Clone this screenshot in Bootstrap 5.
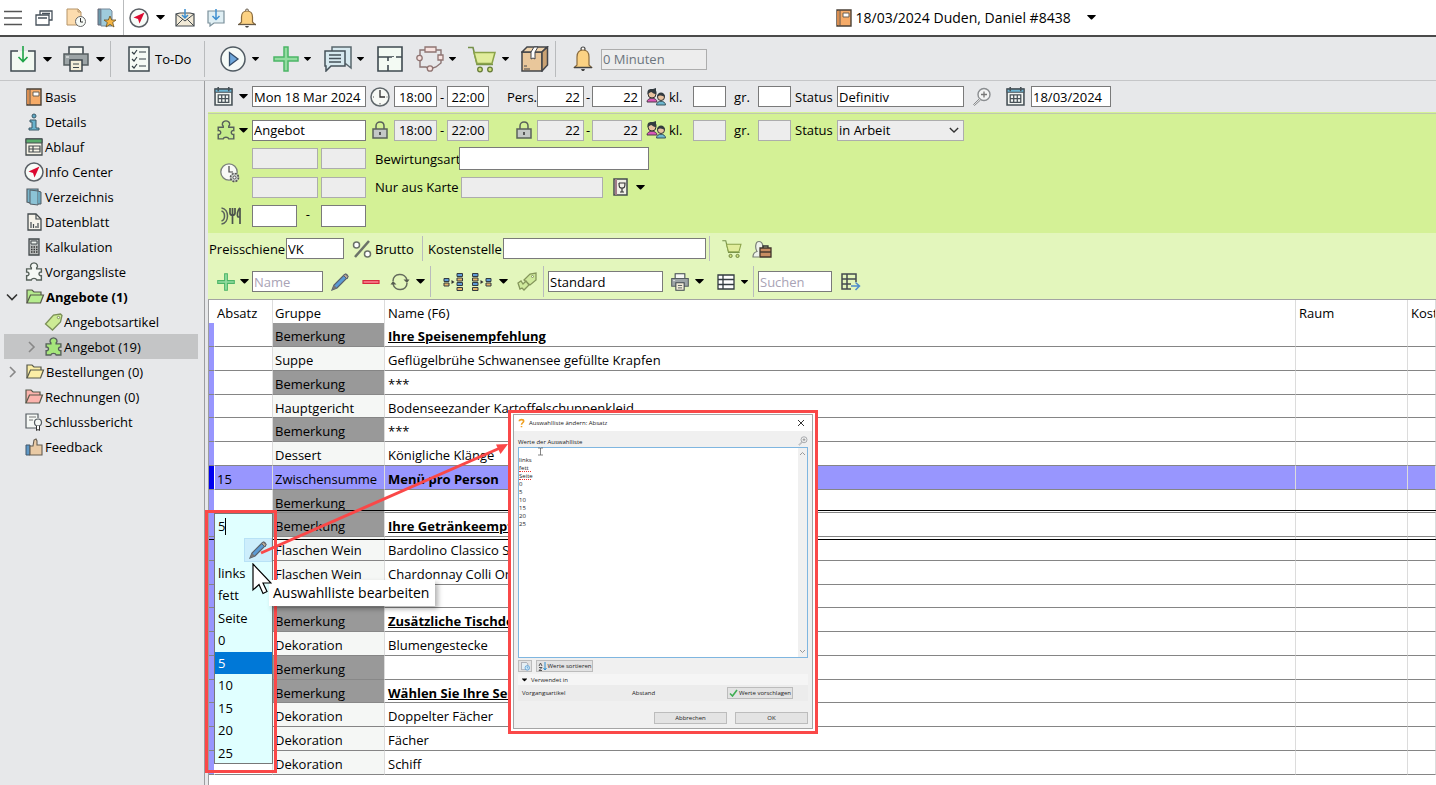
<!DOCTYPE html>
<html lang="de">
<head>
<meta charset="utf-8">
<meta name="viewport" content="width=device-width, initial-scale=1">
<title>18/03/2024 Duden, Daniel #8438</title>
<link href="https://cdn.jsdelivr.net/npm/bootstrap@5.3.0/dist/css/bootstrap.min.css" rel="stylesheet">
<style>
body{font-family:"Open Sans","Noto Sans",sans-serif;font-size:13px;line-height:18px;color:#000;background:#fff;overflow-x:hidden}
svg{display:block;flex:none}
.slots{display:grid;align-items:center;justify-items:start;white-space:nowrap}
.slots>*{min-width:0}
.ib{border:0;background:none;padding:0;color:#000;display:block}
.vr-line{width:1px;height:100%;background:#b9bbbd}
.fld{height:21px;border:1px solid #7a7a7a;border-radius:0;background:#fff;padding:0 1px;font-size:13px;line-height:18px;color:#000;width:100%;display:block}
.fld.off{background:#ededed;border-color:#adadad}
.fld.num{text-align:right;padding-right:3px}
.fld.mid{text-align:center}
.fld.tall{height:22px}
.fld::placeholder{color:#a9a3b5;opacity:1}
.dash{justify-self:center}
.title-bar{height:37px;border-bottom:2px solid #4a4a4a}
.title-slots{grid-template-columns:31px 31px 31px 26px 6px 27px 19px 32px 31px 1fr;height:35px}
.doc-title{margin-right:23.7%;font-size:14px}
.tool-bar{background:#e7e8ea;height:44px;border-bottom:1px solid #c5c6c8}
.tool-slots{grid-template-columns:33px 20px 33px 14px 18px 27px 49px 16px 32px 21px 31px 20px 33px 20px 39px 33px 19px 34px 19px 34px 18px 28px 106px;height:36px;padding-left:10px}
.work{min-height:calc(100vh - 81px)}
.side{width:205px;flex:none;background:#e7e8ea;border-right:1px solid #9c9d9f;padding:3px 6px 0 4px}
.tree a{display:flex;align-items:center;height:25px;color:#000;text-decoration:none;padding-left:19px;white-space:nowrap}
.tree a.twig{padding-left:2px}
.tree a.twig .chev,.tree a.sub-twig .chev{margin-right:6px}
.tree a.leaf{padding-left:39px}
.tree a.sub-twig{padding-left:21px;background:#c4c5c6}
.main-pane{background:#e7e8ea;padding-left:3px;min-width:0}
.head-slots{grid-template-columns:31px 13px 114px 28px 43px 10px 42px 48px 47px 8px 50px 27px 24px 33px 32px 33px 46px 127px 42px 25px 80px}
.head-slots>:first-child{margin-left:6px}
.row-date{height:31px}
.green{background:#d4f196;border-top:1px solid #d4f196;padding-bottom:6px}
.green-line{height:1px;background:#bfc9ad}
.row-offer{height:32px}
.detail{grid-template-columns:44px 66px 3px 45px 9px 84px 2px 142px 10px 23px 12px;grid-template-rows:23px 24px 23px;row-gap:5px;padding-top:1px}
.detail .icon-tall{grid-row:1/3;grid-column:1}
.detail .wide{grid-column:7/13;width:190px;height:23px;margin-left:0}
.detail .c1{grid-column:1}
.detail .c2{grid-column:2}
.light{background:#e3f6bc;height:67px;padding-top:3px;border-bottom:1px solid #a3a3a3}
.bar-a{grid-template-columns:78px 58px 8px 23px 47px 6px 75px 203px 3px 13px 30px 22px;height:25px}
.bar-a>label:first-child{padding-left:1px}
.bar-b{grid-template-columns:32px 12px 71px 8px 31px 28px 26px 14px 13px 29px 27px 18px 26px 5px 115px 8px 24px 22px 24px 12px 5px 74px 9px 20px;height:31px;margin-top:5px}
.grid-wrap{background:#fff;border-left:1px solid #9c9d9f;min-height:calc(100vh - 300px)}
.items{table-layout:fixed;width:100%;border-collapse:separate;border-spacing:0}
.items th,.items td{height:24px;padding:3px 2px 0;font-weight:400;white-space:nowrap;overflow:hidden;border-right:1px solid #dcdcdc;line-height:18px}
.items td{border-bottom:1px solid #858585}
.items tr:nth-child(4n) td{height:23px}
.items thead th{height:23px}
.items td:first-child{background:#9896fe;border-right:1px solid #fff;padding:0}
.items th:first-child{border:0}
.items td:nth-child(3){background:#f5f7f5}
.items td:nth-child(n+4),.items th:nth-child(n+4){padding-left:3px}
.items tr.note td:nth-child(3){background:#999;border-bottom-color:#888}
.items tr.sum td{background:#9896fe}
.items tr.sum td:first-child{background:#0000f0}
.items tr.cur{position:relative}
.items tr.cur td:first-child::after{content:"";position:absolute;left:0;right:0;top:-3px;bottom:-3px;border-top:1px solid #000;border-bottom:1px solid #000}
.items u{font-weight:700}
.overlay-root{left:205px}
.frame{position:absolute;border:3px solid #fa4848}
.pick-frame{left:0;top:510px;width:72px;height:263px;z-index:4;pointer-events:none}
.pick{position:absolute;left:9px;top:513px;width:59px;height:251px;background:#e0ffff;border:1px solid #777;z-index:3}
.pick input{border:0;background:none;height:24px;width:100%;padding:0 3px;outline:0;font-size:13px;display:block}
.pick .text-caret{position:absolute;left:10px;top:4px;width:1px;height:17px;background:#000}
.pick .edit{width:28px;height:24px;margin-left:29px;background:#cdeefc;border:1px solid #b8e2f6;padding:2px 4px}
.pick li{height:23px;line-height:22px;padding-left:3px}
.pick li:nth-child(2n+1){height:22px}
.pick li.on{background:#0078d7;color:#fff}
.arrow,.pointer{position:absolute;z-index:6;pointer-events:none}
.arrow{left:52px;top:435px}
.pointer{left:47px;top:563px;z-index:7}
.tip{position:absolute;left:64px;top:580px;height:26px;padding:0 6px 0 4px;line-height:26px;font-size:14px;background:#fff;box-shadow:3px 3px 5px rgba(0,0,0,.3);z-index:5;white-space:nowrap}
.dlg-frame{left:303px;top:410px;width:310px;height:324px;background:#fff;z-index:5;padding:1px 2px 2px}
.dlg{background:#f0f0f0;border:1px solid #a5a5a5;height:100%;font-size:6px;line-height:8px;color:#222;white-space:nowrap}
.dlg-title{height:16px;background:#fff}
.dlg-label{height:16px;padding-bottom:1px}
.dlg textarea{width:100%;height:211px;border:1px solid #7fb6e0;border-radius:0;padding:0;font-size:6px;line-height:8px;resize:none;display:block;outline:0;overflow:hidden;color:#222}
.dlg .gbtn{background:#e3e3e3;border:1px solid #bcbcbc;font-size:6px;line-height:8px;padding:1px 2px;color:#222;height:12px;display:flex;align-items:center;justify-content:center;gap:1px}
.wavy{position:absolute;left:1px;height:1px;width:12px;border-bottom:1px dotted #e33}
.gbtn.w-s{width:14px}.gbtn.w-m{width:57px}.gbtn.w-l{width:66px}.gbtn.w-x{width:73px}
.used-head{background:#f5f5f5;height:11px;margin-top:2px}
.used-row{background:#ececec;height:16px}
.scroll-strip{position:absolute;right:1px;top:1px;bottom:1px;width:9px;background:#f0f0f0}
.ibeam{position:absolute;left:20px;top:0}
</style>
</head>
<body>
<svg width="0" height="0" class="position-absolute" aria-hidden="true">
<defs>
<symbol id="caret" viewBox="0 0 10 6"><path d="M0 0h10v1L5.500 5.500h-1L0 1z" fill="#000"/></symbol>
<symbol id="menu" viewBox="0 0 18 18"><path d="M0 2.500h18M0 9h18M0 15.500h18" stroke="#555" stroke-width="1.300"/></symbol>
<symbol id="windows" viewBox="0 0 18 18"><g fill="#fff" stroke="#46505a" stroke-width="1.300"><path d="M5 6V2h12v9h-3"/><path d="M1 6h13v10H1z"/><path d="M3 9h9M7 4.500h8"/></g></symbol>
<symbol id="fileclock" viewBox="0 0 20 20"><path d="M1 1h11l3 3v13H1z" fill="#fcdcae" stroke="#b59468"/><path d="M12 1v3h3" fill="none" stroke="#b59468"/><circle cx="14.500" cy="13.500" r="5" fill="#f6faf6" stroke="#666"/><path d="M14.500 10v4H17" fill="none" stroke="#333"/></symbol>
<symbol id="bookclock" viewBox="0 0 20 20"><path d="M1 1h11l3 3v13H1z" fill="#e4eef4" stroke="#667"/><circle cx="14" cy="13" r="5" fill="#d9effa" stroke="#3d8ed0" stroke-width="1.500"/><path d="M14 10v3.500h2.500" fill="none" stroke="#3d8ed0" stroke-width="1.500"/></symbol>
<symbol id="bookstar" viewBox="0 0 20 20"><path d="M1 1h3v16H1z" fill="#6b98aa" stroke="#667"/><path d="M4 1h9l2 2v15H4z" fill="#9fcbdc" stroke="#789"/><path d="M13 8l1.700 4H19l-3.300 2.500L17 19l-4-2.600L9 19l1.300-4.500L7 12h4.300z" fill="#f6b544" stroke="#665226" stroke-width=".8"/></symbol>
<symbol id="compass" viewBox="0 0 20 20"><circle cx="10" cy="10" r="9" fill="#f8fcf8" stroke="#5b6066" stroke-width="1.500"/><path d="M15.500 4.500L4.500 9.500l4.500 1.500 1.500 4.500z" fill="#dc0a30"/></symbol>
<symbol id="mail" viewBox="0 0 20 18"><path d="M1 5v12h18V5l-4-1H5z" fill="#f2ead7" stroke="#444b50" stroke-width="1.200"/><path d="M1 5l9 7 9-7M1 17l7-7M19 17l-7-7" fill="none" stroke="#444b50"/><path d="M10 0v9M7 6l3 3 3-3" fill="none" stroke="#3d8ed0" stroke-width="1.500"/></symbol>
<symbol id="chatin" viewBox="0 0 18 18"><path d="M1 2h16v12H7l-4 3v-3H1z" fill="#e0eff4" stroke="#7a8f9a" stroke-width="1.200"/><path d="M9 0v10M5.500 7L9 10.500 12.500 7" fill="none" stroke="#3d8ed0" stroke-width="1.500"/></symbol>
<symbol id="bell" viewBox="0 0 20 26"><circle cx="10" cy="3" r="2" fill="#fff" stroke="#444" stroke-width="1.200"/><path d="M4 19V11c0-4 2-7 6-7s6 3 6 7v8l2.500 2.500H1.500z" fill="#fcd283" stroke="#8a6b3d" stroke-width="1.200"/><path d="M1 21.500h18" stroke="#444" stroke-width="1.500"/><path d="M8 23h4l-1 2H9z" fill="#444"/></symbol>
<symbol id="bellsm" viewBox="0 0 18 20"><circle cx="9" cy="2.500" r="1.500" fill="#fff" stroke="#665a48"/><path d="M3.500 14V9c0-3.500 2-6 5.500-6s5.500 2.500 5.500 6v5l2.500 2.500H1z" fill="#fcd283" stroke="#8a6b3d" stroke-width="1.200"/><path d="M0 16.500h18" stroke="#665a48" stroke-width="1.300"/><path d="M7 18h4l-1 1.500H8z" fill="#444"/></symbol>
<symbol id="book" viewBox="0 0 16 18"><path d="M1 1h14v16H1z" fill="#f6ab68" stroke="#4b4238" stroke-width="1.400"/><path d="M4 1v16" stroke="#5d5145"/><path d="M7 4h6v4H7z" fill="#fff" stroke="#6d6150"/><path d="M2 2v14" stroke="#d98d50" stroke-width="2"/></symbol>
<symbol id="import" viewBox="0 0 26 26"><path d="M8 5H1v20h24V5h-7" fill="#f2f9f1" stroke="#3f4a50" stroke-width="1.500"/><path d="M13 0v15M8.500 11l4.500 4.500L17.500 11" fill="none" stroke="#1ea447" stroke-width="1.600"/></symbol>
<symbol id="printer" viewBox="0 0 26 26"><path d="M6 8V1h14v7" fill="#f6f8f4" stroke="#3d464c" stroke-width="1.500"/><path d="M1 8h24v11H1z" fill="#9ca4a6" stroke="#555d60" stroke-width="1.500"/><path d="M3 11h3" stroke="#fff"/><path d="M7 14h12v11H7z" fill="#f3eed9" stroke="#3d464c" stroke-width="1.500"/><path d="M10 18h6M10 21.500h6" stroke="#3d464c" stroke-width="1.200"/></symbol>
<symbol id="todo" viewBox="0 0 22 26"><path d="M1 1h20v24H1z" fill="#f5faf5" stroke="#3f4a50" stroke-width="1.500"/><path d="M11 6h7M11 13h7M11 20h7M4 6l2 2 3-4M4 13l2 2 3-4M4 20l2 2 3-4" fill="none" stroke="#333f45" stroke-width="1.200"/></symbol>
<symbol id="play" viewBox="0 0 26 26"><circle cx="13" cy="13" r="12" fill="#f5faf7" stroke="#505a62" stroke-width="1.500"/><path d="M9.500 6.500v13l8.500-6.500z" fill="#6ea8dc" stroke="#334c68" stroke-width="1.300"/></symbol>
<symbol id="plus" viewBox="0 0 26 26"><path d="M11 1h4v10h10v4H15v10h-4V15H1v-4h10z" fill="#93dca0" stroke="#4cb567" stroke-width="1.500"/></symbol>
<symbol id="chats" viewBox="0 0 28 26"><path d="M8 1h19v21l-5-4H8z" fill="#d7e9ef" stroke="#59676e" stroke-width="1.500"/><path d="M1 5h20v15H7l-5 5v-5H1z" fill="#d7e9ef" stroke="#46525a" stroke-width="1.500"/><path d="M5 9h12M5 12.500h12M5 16h12" stroke="#46525a" stroke-width="1.500"/></symbol>
<symbol id="floor" viewBox="0 0 26 26"><path d="M1 1h24v24H1z" fill="#f3faf3" stroke="#3f4a50" stroke-width="1.600"/><path d="M1 11h14M19 11h6M11 11v4M11 19v6M16 11v-1" stroke="#3f4a50" stroke-width="1.600"/></symbol>
<symbol id="ring" viewBox="0 0 28 26"><path d="M9 4H4v17h6l4 2 6-2 5-4V4H9" fill="none" stroke="#8b7473" stroke-width="1.400"/><g fill="#f8e3e0" stroke="#8f7472" stroke-width="1.300"><path d="M9 1h11v5H9zM22 9h5v5h-5z"/><circle cx="3.500" cy="12" r="2.700"/><circle cx="14" cy="22.500" r="2.700"/></g></symbol>
<symbol id="cart" viewBox="0 0 28 26"><path d="M0 1h5l4 17h16" fill="none" stroke="#75904a" stroke-width="1.600"/><path d="M6 6h21l-3 11H9z" fill="#e1ed9c" stroke="#8ba34a" stroke-width="1.500"/><g fill="#cfe07e" stroke="#667c38" stroke-width="1.300"><circle cx="12" cy="23" r="2.300"/><circle cx="22" cy="23" r="2.300"/></g></symbol>
<symbol id="box" viewBox="0 0 28 26"><path d="M1 6h20v19H1z" fill="#e9c79b" stroke="#43454a" stroke-width="1.500"/><path d="M1 6l5-5h20l-5 5z" fill="#f0d4ad" stroke="#43454a" stroke-width="1.500"/><path d="M21 6l5.500-5v18L21 25z" fill="#caa273" stroke="#43454a" stroke-width="1.500"/><path d="M10 6l3-5h4l-3 5v7l-2-1-2 1z" fill="#fff" stroke="#43454a"/><path d="M3 20h3M3 23h6" stroke="#43454a"/></symbol>
<symbol id="info" viewBox="0 0 18 18"><circle cx="9" cy="3" r="2" fill="#5fa9c6" stroke="#3b5866"/><path d="M5 7h6v8h3v2H4v-2h3V9H5z" fill="#69b2cd" stroke="#3b5866"/></symbol>
<symbol id="sched" viewBox="0 0 18 18"><path d="M1 1h16v16H1z" fill="#f6f3e6" stroke="#444b4e" stroke-width="1.300"/><path d="M1 1h16v4H1z" fill="#59ac6c" stroke="#444b4e"/><path d="M4 8h11v6H4zM8 8v6M4 11h11" fill="none" stroke="#444b4e" stroke-width="1.200"/></symbol>
<symbol id="dir" viewBox="0 0 18 18"><path d="M2 1h11v14H5l-3-1z" fill="#79b5cb" stroke="#555f66" stroke-width="1.200"/><path d="M5 2l8 1v14l-8-1z" fill="#8cc3d6" stroke="#555f66"/><path d="M13 3l3 1v12h-3" fill="#6da8be" stroke="#555f66"/></symbol>
<symbol id="sheet" viewBox="0 0 18 18"><path d="M3 1h8l5 5v11H3z" fill="#f6f3ea" stroke="#444b4e" stroke-width="1.300"/><path d="M11 1v5h5M6 9v6M8.500 11v4M11 13v2M13 10v5" fill="none" stroke="#444b4e" stroke-width="1.200"/></symbol>
<symbol id="calc" viewBox="0 0 18 18"><path d="M4 1h10v16H4z" fill="#b9bcbb" stroke="#444b4e" stroke-width="1.300"/><path d="M6 3h6v3H6z" fill="#eef3ee" stroke="#444b4e"/><path d="M6 9h7M6 11.500h7M6 14h7" stroke="#333" stroke-width="1.300" stroke-dasharray="1.500 1"/></symbol>
<symbol id="puzzle" viewBox="0 0 18 18"><path d="M2 6.500h4.500V5.500C5 4.500 5.500 .8 9 .8s4 3.700 2.500 4.700v1H16v3c-3-.5-3 4 0 3.500V17h-4.500c-.5-2-4.500-2-5 0H2v-4c3 .5 3-4 0-3.500z" fill="var(--f,#f5f8f5)" stroke="#56605a" stroke-width="1.300"/></symbol>
<symbol id="folder" viewBox="0 0 18 18"><path d="M1 15V2h5l2 2h7v3" fill="var(--f)" stroke="#56584a" stroke-width="1.200"/><path d="M1 15L4.500 7H17.500L14.500 15z" fill="var(--f)" stroke="#56584a" stroke-width="1.200"/></symbol>
<symbol id="tag" viewBox="0 0 18 18"><path d="M1 11L9 2l7-1 1.500 1.500L16 9l-8 8z" fill="#cdeb95" stroke="#7b8f57" stroke-width="1.300"/><circle cx="14" cy="4.500" r="1.200" fill="#fff" stroke="#7b8f57"/></symbol>
<symbol id="report" viewBox="0 0 18 18"><path d="M11 15H1V1h12v4" fill="#f5f8f5" stroke="#555b60" stroke-width="1.200"/><path d="M4 4h7M4 7h4" stroke="#777"/><circle cx="13" cy="9.500" r="3.500" fill="#f5f8f5" stroke="#555b60" stroke-width="1.200"/><path d="M11.500 13v4.500l1.500-1 1.500 1V13" fill="#fff" stroke="#333"/></symbol>
<symbol id="thumb" viewBox="0 0 18 18"><path d="M1 7h4v10H1z" fill="#5d97c6" stroke="#40576a"/><path d="M5 8h3l1-6 2-1 1 2v4h5v10H5z" fill="#e9caa5" stroke="#655c50" stroke-width="1.100"/></symbol>
<symbol id="cdown" viewBox="0 0 12 12"><path d="M1 3.500l5 5 5-5" fill="none" stroke="#333" stroke-width="1.600"/></symbol>
<symbol id="cright" viewBox="0 0 12 12"><path d="M4 1l5 5-5 5" fill="none" stroke="#888" stroke-width="1.600"/></symbol>
<symbol id="cal" viewBox="0 0 18 18"><path d="M1 2h16v15H1z" fill="#f2f5f2" stroke="#485258" stroke-width="1.500"/><path d="M1 2h16v3H1z" fill="#6cb5d2" stroke="#485258"/><path d="M4 0v4M14 0v4" stroke="#485258" stroke-width="1.500"/><path d="M4 7.500h10v7H4zM4 11h10M7.300 7.500v7M10.700 7.500v7" fill="none" stroke="#485258" stroke-width="1.200"/></symbol>
<symbol id="clock" viewBox="0 0 20 20"><circle cx="10" cy="10" r="9" fill="#f8faf6" stroke="#5f676b" stroke-width="1.500"/><path d="M10 3v7h5" fill="none" stroke="#333" stroke-width="1.300"/><path d="M3 10h1M10 16v1.500M16.500 10h1" stroke="#555"/></symbol>
<symbol id="lock" viewBox="0 0 16 18"><path d="M4 8V5c0-5.300 8-5.300 8 0v3" fill="none" stroke="#59615b" stroke-width="1.500"/><path d="M1 8h14v9H1z" fill="#c4c8c6" stroke="#59615b" stroke-width="1.500"/><path d="M8 11v3" stroke="#333" stroke-width="1.500"/></symbol>
<symbol id="people" viewBox="0 0 20 18"><circle cx="6" cy="6" r="4" fill="#e9c2a0" stroke="#333"/><path d="M1.500 6C1 0 5 1 7 1l3-1v3c1 1 .5 2 0 3-3 0-4-2-5-2z" fill="#333b40"/><path d="M1 14c0-5 10-5 10 0z" fill="#db57b8" stroke="#4b3a48"/><circle cx="15" cy="9" r="3.500" fill="#e9c2a0" stroke="#333"/><path d="M11 9c0-6 8-6 8 0-3-2-6-2-8 0z" fill="#333b40"/><path d="M10.500 17c0-5 9-5 9 0z" fill="#6db7cf" stroke="#36525c"/></symbol>
<symbol id="zoomp" viewBox="0 0 20 20"><circle cx="12" cy="7.500" r="6" fill="#f3f4f4" stroke="#8a8d90" stroke-width="1.400"/><path d="M12 4.500v6M9 7.500h6" stroke="#777" stroke-width="1.300"/><path d="M7.500 11.500L1.500 17.500l1 1 6-5.500" fill="#ddd" stroke="#8a8d90"/></symbol>
<symbol id="clockgear" viewBox="0 0 20 20"><circle cx="9" cy="9" r="8.200" fill="#f8faf6" stroke="#7a817a" stroke-width="1.300"/><path d="M9 3v6h4" fill="none" stroke="#444" stroke-width="1.200"/><circle cx="14.500" cy="14.500" r="4" fill="#ccd2cc" stroke="#555" stroke-width="1.600" stroke-dasharray="2 1.100"/><circle cx="14.500" cy="14.500" r="1.500" fill="#fff" stroke="#555"/></symbol>
<symbol id="dine" viewBox="0 0 21 18"><path d="M1 1c8 1 8 15 0 16M1 4c4 1 4 9 0 10" fill="none" stroke="#59615b" stroke-width="1.500"/><path d="M9.500 1v5c0 3 5 3 5 0V1M12 1v16M19.500 1v16M19.500 1c-3 2-3 8-2 9h2" fill="none" stroke="#4b524c" stroke-width="1.700"/></symbol>
<symbol id="wine" viewBox="0 0 15 18"><path d="M1 1h13v16H1z" fill="#f0efe6" stroke="#444b4e" stroke-width="1.500"/><path d="M3 1v16" stroke="#a27c8a" stroke-width="2"/><path d="M6 5h6c0 5-1 5-3 5s-3 0-3-5M9 10v4M7 14h4" fill="none" stroke="#333" stroke-width="1.200"/></symbol>
<symbol id="percent" viewBox="0 0 20 18"><path d="M17 1L3 17" stroke="#6b7268" stroke-width="2.500"/><circle cx="4.500" cy="5" r="3" fill="#fff" stroke="#6b7268" stroke-width="1.500"/><circle cx="15.500" cy="14" r="3" fill="#fff" stroke="#6b7268" stroke-width="1.500"/></symbol>
<symbol id="client" viewBox="0 0 20 18"><path d="M7 17H1c0-4 2-5 4-5.500-2-3-2-10 2-10s5 7 3 9" fill="#eef2ea" stroke="#7a8077" stroke-width="1.200"/><path d="M11 8V6h5v2" fill="none" stroke="#333" stroke-width="1.300"/><path d="M8 8h11v9H8z" fill="#c98d63" stroke="#41352d" stroke-width="1.300"/><path d="M8 12h11" stroke="#41352d" stroke-width="1.400"/></symbol>
<symbol id="pencil" viewBox="0 0 18 18"><path d="M1 17l2-5L13.500 1.500c2-1 4 1 3 3L6 15z" fill="#5b9bd5" stroke="#59606a" stroke-width="1.200"/><path d="M12.500 2.500l3.500 3.500 1-2.500-2.500-2.500z" fill="#b9a996" stroke="#59606a"/><path d="M1 17l2-5 3 3z" fill="#777"/></symbol>
<symbol id="minus" viewBox="0 0 18 18"><path d="M1 7.500h16v3H1z" fill="#f2707f" stroke="#d8283f" stroke-width="1.200"/></symbol>
<symbol id="cycle" viewBox="0 0 20 18"><path d="M3 8c0-8 12-9 14-1M17 10c0 8-12 9-14 1" fill="none" stroke="#646b5c" stroke-width="1.500"/><path d="M13.500 6.500h6L17 10zM.5 11.500h6L3 8z" fill="#565d50"/></symbol>
<symbol id="split" viewBox="0 0 20 18"><g fill="#5f9bd6" stroke="#333b40"><path d="M1 5.500h5v3H1zM14 .5h5.500v3H14zM14 9.500h5.500v3H14z"/></g><g fill="#e3b46a" stroke="#333b40"><path d="M1 10h5v3H1zM14 5h5.500v3H14zM14 14.500h5.500v3H14z"/></g><path d="M8.500 7l3 2-3 2z" fill="#333"/></symbol>
<symbol id="merge" viewBox="0 0 20 18"><g fill="#5f9bd6" stroke="#333b40"><path d="M14 5.500h5v3h-5zM.5.5H6v3H.5zM.5 9.500H6v3H.5z"/></g><g fill="#e3b46a" stroke="#333b40"><path d="M14 10h5v3h-5zM.5 5H6v3H.5zM.5 14.500H6v3H.5z"/></g><path d="M8.500 7l3 2-3 2z" fill="#333"/></symbol>
<symbol id="tags" viewBox="0 0 20 20"><path d="M7 8l6-6 6-1v7l-6 5z" fill="#cfea9c" stroke="#84965b" stroke-width="1.300"/><path d="M1 11l3-2 2 3 3-3 3 4-5 5-2-2-2 1z" fill="#cfea9c" stroke="#84965b" stroke-width="1.300"/><circle cx="15.500" cy="4.500" r="1" fill="#fff" stroke="#84965b"/></symbol>
<symbol id="tbl" viewBox="0 0 18 18"><path d="M1 2h16v14H1zM1 6.500h16M1 11.500h16M6 2v14" fill="#fff" stroke="#333b40" stroke-width="1.300"/></symbol>
<symbol id="tblout" viewBox="0 0 20 18"><path d="M15 9V1H1v15h9M1 6h14M1 11h9M6 1v15" fill="none" stroke="#444b4e" stroke-width="1.500"/><path d="M10 13h8M14.500 9.500l4 3.500-4 4" fill="none" stroke="#4d8ccc" stroke-width="1.500"/></symbol>
</defs>
</svg>

<header>
<div class="title-bar d-flex align-items-center">
<div class="slots title-slots flex-grow-1 ps-1">
<button class="ib" aria-label="Menü"><svg width="18" height="18"><use href="#menu"/></svg></button>
<button class="ib" aria-label="Fenster"><svg width="18" height="18"><use href="#windows"/></svg></button>
<button class="ib" aria-label="Verlauf"><svg width="20" height="20"><use href="#fileclock"/></svg></button>
<button class="ib" aria-label="Favoriten"><svg width="20" height="20"><use href="#bookstar"/></svg></button>
<span class="vr-line"></span>
<button class="ib" aria-label="Info Center"><svg width="20" height="20"><use href="#compass"/></svg></button>
<button class="ib" aria-label="Mehr"><svg width="9" height="5"><use href="#caret"/></svg></button>
<button class="ib" aria-label="Post"><svg width="20" height="18"><use href="#mail"/></svg></button>
<button class="ib" aria-label="Nachricht"><svg width="18" height="18"><use href="#chatin"/></svg></button>
<button class="ib" aria-label="Alarm"><svg width="18" height="20"><use href="#bellsm"/></svg></button>
</div>
<button class="ib doc-title d-flex align-items-center"><svg width="16" height="18" class="me-1"><use href="#book"/></svg>18/03/2024 Duden, Daniel #8438<svg width="9" height="5" class="ms-3"><use href="#caret"/></svg></button>
</div>
<div class="tool-bar pt-1">
<div class="slots tool-slots">
<button class="ib" aria-label="Import"><svg width="26" height="26"><use href="#import"/></svg></button>
<button class="ib" aria-label="Mehr"><svg width="9" height="5"><use href="#caret"/></svg></button>
<button class="ib" aria-label="Drucken"><svg width="26" height="26"><use href="#printer"/></svg></button>
<button class="ib" aria-label="Mehr"><svg width="9" height="5"><use href="#caret"/></svg></button>
<span class="vr-line"></span>
<button class="ib" aria-label="Liste"><svg width="22" height="26"><use href="#todo"/></svg></button>
<button class="ib">To-Do</button>
<span class="vr-line"></span>
<button class="ib" aria-label="Start"><svg width="26" height="26"><use href="#play"/></svg></button>
<button class="ib" aria-label="Mehr"><svg width="7" height="4"><use href="#caret"/></svg></button>
<button class="ib" aria-label="Neu"><svg width="26" height="26"><use href="#plus"/></svg></button>
<button class="ib" aria-label="Mehr"><svg width="7" height="4"><use href="#caret"/></svg></button>
<button class="ib" aria-label="Chat"><svg width="28" height="26"><use href="#chats"/></svg></button>
<button class="ib" aria-label="Mehr"><svg width="7" height="4"><use href="#caret"/></svg></button>
<button class="ib" aria-label="Raumplan"><svg width="26" height="26"><use href="#floor"/></svg></button>
<button class="ib" aria-label="Ablauf"><svg width="28" height="26"><use href="#ring"/></svg></button>
<button class="ib" aria-label="Mehr"><svg width="7" height="4"><use href="#caret"/></svg></button>
<button class="ib" aria-label="Warenkorb"><svg width="28" height="27"><use href="#cart"/></svg></button>
<button class="ib" aria-label="Mehr"><svg width="7" height="4"><use href="#caret"/></svg></button>
<button class="ib" aria-label="Paket"><svg width="28" height="26"><use href="#box"/></svg></button>
<span class="vr-line"></span>
<button class="ib" aria-label="Erinnerung"><svg width="20" height="26"><use href="#bell"/></svg></button>
<input class="fld off text-secondary" aria-label="Erinnerung in Minuten" value="0 Minuten">
</div>
</div>
</header>

<div class="work d-flex">
<nav class="side tree">
<a href="#"><svg width="22" height="18"><use href="#book"/></svg>Basis</a>
<a href="#"><svg width="22" height="18"><use href="#info"/></svg>Details</a>
<a href="#"><svg width="22" height="18"><use href="#sched"/></svg>Ablauf</a>
<a href="#"><svg width="22" height="20"><use href="#compass"/></svg>Info Center</a>
<a href="#"><svg width="22" height="18"><use href="#dir"/></svg>Verzeichnis</a>
<a href="#"><svg width="22" height="18"><use href="#sheet"/></svg>Datenblatt</a>
<a href="#"><svg width="22" height="18"><use href="#calc"/></svg>Kalkulation</a>
<a href="#"><svg width="22" height="19"><use href="#puzzle"/></svg>Vorgangsliste</a>
<a href="#" class="twig fw-bold"><svg class="chev" width="12" height="12"><use href="#cdown"/></svg><svg width="22" height="18" style="--f:#b5ec8e"><use href="#folder"/></svg>Angebote (1)</a>
<a href="#" class="leaf"><svg width="21" height="18"><use href="#tag"/></svg>Angebotsartikel</a>
<a href="#" class="sub-twig"><svg class="chev" width="12" height="12"><use href="#cright"/></svg><svg width="21" height="19" style="--f:#a5e67b"><use href="#puzzle"/></svg>Angebot (19)</a>
<a href="#" class="twig"><svg class="chev" width="12" height="12"><use href="#cright"/></svg><svg width="22" height="18" style="--f:#fbeea6"><use href="#folder"/></svg>Bestellungen (0)</a>
<a href="#"><svg width="22" height="18" style="--f:#fbb3ad"><use href="#folder"/></svg>Rechnungen (0)</a>
<a href="#"><svg width="22" height="18"><use href="#report"/></svg>Schlussbericht</a>
<a href="#"><svg width="22" height="18"><use href="#thumb"/></svg>Feedback</a>
</nav>

<main class="main-pane flex-grow-1">
<div class="slots head-slots row-date">
<svg width="19" height="19"><use href="#cal"/></svg>
<svg width="9" height="5"><use href="#caret"/></svg>
<input class="fld" aria-label="Datum" value="Mon 18 Mar 2024">
<svg class="ms-auto me-1" width="20" height="20"><use href="#clock"/></svg>
<input class="fld mid" aria-label="Beginn" value="18:00"><span class="dash">-</span><input class="fld mid" aria-label="Ende" value="22:00">
<label class="ms-auto" for="pers">Pers.</label>
<input class="fld num" id="pers" value="22"><span class="dash">-</span><input class="fld num" aria-label="Personen bis" value="22">
<svg class="ms-1" width="20" height="18"><use href="#people"/></svg>
<label for="kl1">kl.</label><input class="fld" id="kl1">
<label class="dash" for="gr1">gr.</label><input class="fld" id="gr1">
<label class="ms-1" for="st1">Status</label><input class="fld" id="st1" value="Definitiv">
<svg class="ms-2" width="20" height="20"><use href="#zoomp"/></svg>
<svg width="19" height="19"><use href="#cal"/></svg>
<input class="fld" aria-label="Statusdatum" value="18/03/2024">
</div>
<section class="green">
<div class="green-line"></div>
<div class="slots head-slots row-offer">
<svg class="ms-2" width="20" height="20" style="--f:#c4ec8c"><use href="#puzzle"/></svg>
<svg width="9" height="5"><use href="#caret"/></svg>
<input class="fld" aria-label="Vorgang" value="Angebot">
<svg class="dash" width="16" height="18"><use href="#lock"/></svg>
<input class="fld off mid" aria-label="Beginn Angebot" value="18:00"><span class="dash">-</span><input class="fld off mid" aria-label="Ende Angebot" value="22:00">
<svg class="ms-auto me-1" width="18" height="18"><use href="#lock"/></svg>
<input class="fld off num" aria-label="Personen von" value="22"><span class="dash">-</span><input class="fld off num" aria-label="Personen bis" value="22">
<svg class="ms-1" width="20" height="18"><use href="#people"/></svg>
<label for="kl2">kl.</label><input class="fld off" id="kl2">
<label class="dash" for="gr2">gr.</label><input class="fld off" id="gr2">
<label class="ms-1" for="st2">Status</label>
<div class="position-relative w-100"><select class="fld off" id="st2" style="appearance:none"><option>in Arbeit</option></select><svg class="position-absolute top-50 end-0 translate-middle-y me-1" width="12" height="10"><use href="#cdown"/></svg></div>
</div>
<div class="slots detail">
<svg class="icon-tall ms-2 ps-1" width="24" height="20"><use href="#clockgear"/></svg>
<input class="fld off" aria-label="Zeit 1"><i></i><input class="fld off" aria-label="Dauer 1"><i></i>
<label for="bew">Bewirtungsart</label>
<input class="fld wide" id="bew">
<input class="fld off c2" aria-label="Zeit 2"><i></i><input class="fld off" aria-label="Dauer 2"><i></i>
<label for="karte">Nur aus Karte</label><i></i>
<input class="fld off" id="karte"><i></i>
<svg width="15" height="18"><use href="#wine"/></svg>
<svg width="9" height="5"><use href="#caret"/></svg>
<svg class="c1 ms-2 ps-1" width="26" height="18"><use href="#dine"/></svg>
<div class="d-flex justify-content-between w-100 pe-1"><input class="fld tall" style="width:45px" aria-label="Essen von"><span class="pe-1">-</span></div><i></i>
<input class="fld tall" aria-label="Essen bis">
</div>
</section>
<section class="light">
<div class="slots bar-a">
<label for="preis">Preisschiene</label><input class="fld" id="preis" value="VK"><i></i>
<svg width="20" height="18"><use href="#percent"/></svg><span>Brutto</span><span class="vr-line"></span>
<label for="kst">Kostenstelle</label><input class="fld" id="kst"><i></i><span class="vr-line"></span>
<svg width="20" height="18"><use href="#cart"/></svg><svg width="20" height="18"><use href="#client"/></svg>
</div>
<div class="slots bar-b">
<svg class="ms-2" width="20" height="18"><use href="#plus"/></svg>
<svg width="9" height="5"><use href="#caret"/></svg>
<input class="fld" placeholder="Name" aria-label="Name"><i></i>
<svg width="18" height="18"><use href="#pencil"/></svg>
<svg width="18" height="18"><use href="#minus"/></svg>
<svg width="20" height="18"><use href="#cycle"/></svg>
<svg width="9" height="5"><use href="#caret"/></svg><span class="vr-line"></span>
<svg width="20" height="18"><use href="#split"/></svg>
<svg width="20" height="18"><use href="#merge"/></svg>
<svg width="9" height="5"><use href="#caret"/></svg>
<svg width="20" height="20"><use href="#tags"/></svg><span class="vr-line"></span>
<input class="fld" value="Standard" aria-label="Ansicht"><i></i>
<svg width="18" height="18"><use href="#printer"/></svg>
<svg width="9" height="5"><use href="#caret"/></svg>
<svg width="18" height="18"><use href="#tbl"/></svg>
<svg width="7" height="4"><use href="#caret"/></svg><span class="vr-line"></span>
<input class="fld" placeholder="Suchen" aria-label="Suchen"><i></i>
<svg width="20" height="18"><use href="#tblout"/></svg>
</div>
</section>
<div class="grid-wrap">
<table class="items">
<colgroup><col style="width:6px"><col style="width:58px"><col style="width:112px"><col><col style="width:112px"><col style="width:28px"></colgroup>
<thead><tr><th></th><th>Absatz</th><th>Gruppe</th><th>Name (F6)</th><th>Raum</th><th>Kost</th></tr></thead>
<tbody>
<tr class="note"><td></td><td></td><td>Bemerkung</td><td><u>Ihre Speisenempfehlung</u></td><td></td><td></td></tr>
<tr><td></td><td></td><td>Suppe</td><td>Geflügelbrühe Schwanensee gefüllte Krapfen</td><td></td><td></td></tr>
<tr class="note"><td></td><td></td><td>Bemerkung</td><td>***</td><td></td><td></td></tr>
<tr><td></td><td></td><td>Hauptgericht</td><td>Bodenseezander Kartoffelschuppenkleid</td><td></td><td></td></tr>
<tr class="note"><td></td><td></td><td>Bemerkung</td><td>***</td><td></td><td></td></tr>
<tr><td></td><td></td><td>Dessert</td><td>Königliche Klänge</td><td></td><td></td></tr>
<tr class="sum"><td></td><td>15</td><td>Zwischensumme</td><td><b>Menü pro Person</b></td><td></td><td></td></tr>
<tr class="note"><td></td><td></td><td>Bemerkung</td><td></td><td></td><td></td></tr>
<tr class="note cur"><td></td><td></td><td>Bemerkung</td><td><u>Ihre Getränkeempfe</u></td><td></td><td></td></tr>
<tr><td></td><td></td><td>Flaschen Wein</td><td>Bardolino Classico Su</td><td></td><td></td></tr>
<tr><td></td><td></td><td>Flaschen Wein</td><td>Chardonnay Colli Ori</td><td></td><td></td></tr>
<tr class="note"><td></td><td></td><td>Bemerkung</td><td></td><td></td><td></td></tr>
<tr class="note"><td></td><td></td><td>Bemerkung</td><td><u>Zusätzliche Tischde</u></td><td></td><td></td></tr>
<tr><td></td><td></td><td>Dekoration</td><td>Blumengestecke</td><td></td><td></td></tr>
<tr class="note"><td></td><td></td><td>Bemerkung</td><td></td><td></td><td></td></tr>
<tr class="note"><td></td><td></td><td>Bemerkung</td><td><u>Wählen Sie Ihre Ser</u></td><td></td><td></td></tr>
<tr><td></td><td></td><td>Dekoration</td><td>Doppelter Fächer</td><td></td><td></td></tr>
<tr><td></td><td></td><td>Dekoration</td><td>Fächer</td><td></td><td></td></tr>
<tr><td></td><td></td><td>Dekoration</td><td>Schiff</td><td></td><td></td></tr>
</tbody>
</table>
</div>
</main>
</div>

<div class="overlay-root position-absolute top-0">
<div class="pick">
<input value="5" aria-label="Absatz"><span class="text-caret"></span>
<button class="ib edit" aria-label="Auswahlliste bearbeiten"><svg width="18" height="18"><use href="#pencil"/></svg></button>
<ul class="list-unstyled m-0"><li>links</li><li>fett</li><li>Seite</li><li>0</li><li class="on">5</li><li>10</li><li>15</li><li>20</li><li>25</li></ul>
</div>
<div class="frame pick-frame"></div>
<div class="tip">Auswahlliste bearbeiten</div>
<div class="frame dlg-frame">
<div class="dlg d-flex flex-column" role="dialog" aria-label="Auswahlliste ändern">
<div class="dlg-title d-flex align-items-center ps-1 pe-1"><svg width="7" height="10" viewBox="0 0 8 10" class="me-1"><path d="M1.500 3c0-2.500 5-2.500 5 0 0 1.500-2.500 2-2.500 4M4 8.300v1.500" fill="none" stroke="#f0a020" stroke-width="1.800"/></svg>Auswahlliste ändern: Absatz<button class="ib ms-auto me-1" aria-label="Schließen"><svg width="6" height="6" viewBox="0 0 6 6"><path d="M0 0l6 6M6 0L0 6" stroke="#333"/></svg></button></div>
<div class="dlg-label d-flex justify-content-between align-items-end px-1"><label for="vals">Werte der Auswahlliste</label><svg width="10" height="10"><use href="#zoomp"/></svg></div>
<div class="position-relative ms-1 me-1">
<textarea id="vals">

links
fett
Seite
0
5
10
15
20
25</textarea>
<span class="wavy" style="top:24px"></span><span class="wavy" style="top:32px"></span>
<svg class="ibeam" width="5" height="9" viewBox="0 0 5 9"><path d="M0 1h2l.5.500L3 1h2M2.500 1v7M0 8h5" fill="none" stroke="#666" stroke-width=".8"/></svg>
<div class="scroll-strip d-flex flex-column justify-content-between py-1"><svg class="mx-auto" width="5" height="4" viewBox="0 0 5 4"><path d="M0 3l2.500-2.500L5 3" fill="none" stroke="#999"/></svg><svg class="mx-auto" width="5" height="4" viewBox="0 0 5 4"><path d="M0 1l2.500 2.500L5 1" fill="none" stroke="#999"/></svg></div>
</div>
<div class="d-flex gap-1 ps-1" style="padding-top:2px"><button class="gbtn w-s" aria-label="Verlauf"><svg width="9" height="9"><use href="#bookclock"/></svg></button><button class="gbtn w-m"><svg width="9" height="9" viewBox="0 0 9 9"><path d="M1 4l1.500-3L4 4M1 5.500h3l-3 3h3" fill="none" stroke="#555"/><path d="M7 0v8M5.500 6L7 8l1.500-2" fill="none" stroke="#2d8fd0"/></svg>Werte sortieren</button></div>
<div class="used-head mx-1 ps-1 d-flex align-items-center"><svg width="5" height="4" class="me-1"><use href="#caret"/></svg>Verwendet in</div>
<div class="used-row mx-1 ps-1 d-flex align-items-center"><span style="width:110px">Vorgangsartikel</span><span style="width:95px">Abstand</span><button class="gbtn w-l"><svg width="9" height="8" viewBox="0 0 9 8"><path d="M1 4.500l2.500 2.500L8 1" fill="none" stroke="#3fae52" stroke-width="1.600"/></svg>Werte vorschlagen</button></div>
<div class="mt-auto mb-1 d-flex gap-2 justify-content-end pe-1"><button class="gbtn w-x">Abbrechen</button><button class="gbtn w-x">OK</button></div>
</div>
</div>
<svg class="arrow" width="260" height="125" viewBox="0 0 260 125"><path d="M4 118L243 13" stroke="#fa4848" stroke-width="3"/><path d="M251 9L239 9.500 243.500 19z" fill="#fa4848"/></svg>
<svg class="pointer" width="20" height="32" viewBox="0 0 20 32"><path d="M1 1v26l6-5.500 4 9 4-2-4-8.500h8z" fill="#fff" stroke="#000" stroke-width="1.200"/></svg>
</div>
<script src="https://cdn.jsdelivr.net/npm/bootstrap@5.3.0/dist/js/bootstrap.bundle.min.js"></script>
</body>
</html>
